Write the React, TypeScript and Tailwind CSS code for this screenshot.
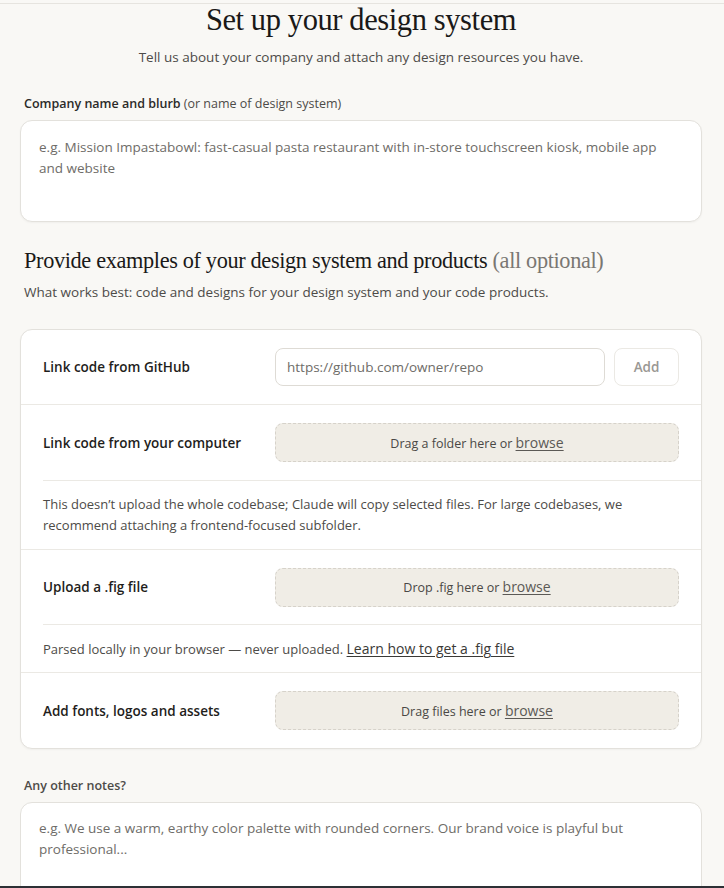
import React from "react";

const sans = { fontFamily: '"Open Sans", "Noto Sans", sans-serif' };
const serif = { fontFamily: '"Liberation Serif", "DejaVu Serif", serif' };

function Drop({ text }: { text: string }) {
  return (
    <div className="flex h-[39px] flex-1 items-center justify-center rounded-lg border border-dashed border-[#d6d2ca] bg-[#f0ede6] text-[12.5px] text-[#4a4845]">
      <span>
        {text} <span className="text-[14px] text-[#5b5955] underline underline-offset-2">browse</span>
      </span>
    </div>
  );
}

function Row({ label, h, children }: { label: string; h: string; children: React.ReactNode }) {
  return (
    <div className={`flex items-center px-[22px] ${h}`}>
      <div className="w-[232px] shrink-0 text-[13.5px] font-semibold text-[#1f1e1c]">{label}</div>
      <div className="flex flex-1 items-center gap-[9px]">{children}</div>
    </div>
  );
}

export default function App() {
  return (
    <div className="h-[888px] w-full overflow-hidden border-b-2 border-[#2d3035] bg-[#f9f8f5] pt-[3px]" style={sans}>
      <div className="flex flex-col border-t border-[#e6e4df] pl-[20px] pr-[22px]">
        <h1 className="text-center text-[30.5px] leading-[32px] tracking-[-0.4px] text-[#1a1918]" style={serif}>
          Set up your design system
        </h1>
        <p className="mt-[11px] text-center text-[13.5px] text-[#4d4b48]">
          Tell us about your company and attach any design resources you have.
        </p>
        <div className="mt-[28px] px-[4px] text-[12.5px] text-[#4d4b48]">
          <span className="font-semibold text-[#2b2a28]">Company name and blurb</span> (or name of design system)
        </div>
        <div className="mt-[6px] h-[102px] rounded-[12px] border border-[#e3e1dc] bg-white pl-[18px] pr-[40px] pt-[16px] text-[13.5px] leading-[21px] text-[#6e6c68] shadow-[0_1px_2px_rgba(0,0,0,0.04)]">
          e.g. Mission Impastabowl: fast-casual pasta restaurant with in-store touchscreen kiosk, mobile app and website
        </div>
        <h2 className="mt-[24px] px-[4px] text-[22.3px] leading-[30px] tracking-[-0.35px] text-[#1a1918]" style={serif}>
          Provide examples of your design system and products <span className="text-[#7a7772]">(all optional)</span>
        </h2>
        <p className="mt-[6px] px-[4px] text-[13.5px] text-[#4d4b48]">
          What works best: code and designs for your design system and your code products.
        </p>
        <div className="mt-[27px] overflow-hidden rounded-[12px] border border-[#e3e1dc] bg-white shadow-[0_1px_2px_rgba(0,0,0,0.04)]">
          <Row label="Link code from GitHub" h="h-[74px]">
            <div className="flex h-[38px] flex-1 items-center rounded-lg border border-[#dedbd5] px-[11px] text-[13.5px] text-[#6e6c68]">
              https://github.com/owner/repo
            </div>
            <div className="flex h-[38px] w-[65px] items-center justify-center rounded-lg border border-[#ebe9e4] text-[13.5px] font-semibold text-[#9a9894]">
              Add
            </div>
          </Row>
          <div className="border-t border-[#ebe9e4]" />
          <Row label="Link code from your computer" h="h-[75px]">
            <Drop text="Drag a folder here or" />
          </Row>
          <div className="ml-[22px] border-t border-[#ebe9e4]" />
          <div className="flex h-[68px] items-center px-[22px] text-[13px] leading-[21px] text-[#4d4b48]">
            <p>
              This doesn’t upload the whole codebase; Claude will copy selected files. For large codebases, we recommend attaching a frontend-focused subfolder.
            </p>
          </div>
          <div className="border-t border-[#ebe9e4]" />
          <Row label="Upload a .fig file" h="h-[74px]">
            <Drop text="Drop .fig here or" />
          </Row>
          <div className="ml-[22px] border-t border-[#ebe9e4]" />
          <div className="flex h-[47px] items-center px-[22px] text-[13px] text-[#4d4b48]">
            <p>
              Parsed locally in your browser — never uploaded.{" "}
              <span className="text-[14px] text-[#3a3936] underline underline-offset-2">Learn how to get a .fig file</span>
            </p>
          </div>
          <div className="border-t border-[#ebe9e4]" />
          <Row label="Add fonts, logos and assets" h="h-[75px]">
            <Drop text="Drag files here or" />
          </Row>
        </div>
        <div className="mt-[28px] px-[4px] text-[12.5px] font-semibold text-[#4d4b48]">Any other notes?</div>
        <div className="mt-[6px] h-[100px] shrink-0 rounded-[12px] border border-[#e3e1dc] bg-white pl-[18px] pr-[40px] pt-[15px] text-[13.5px] leading-[21px] text-[#6e6c68]">
          e.g. We use a warm, earthy color palette with rounded corners. Our brand voice is playful but professional...
        </div>
      </div>
    </div>
  );
}
